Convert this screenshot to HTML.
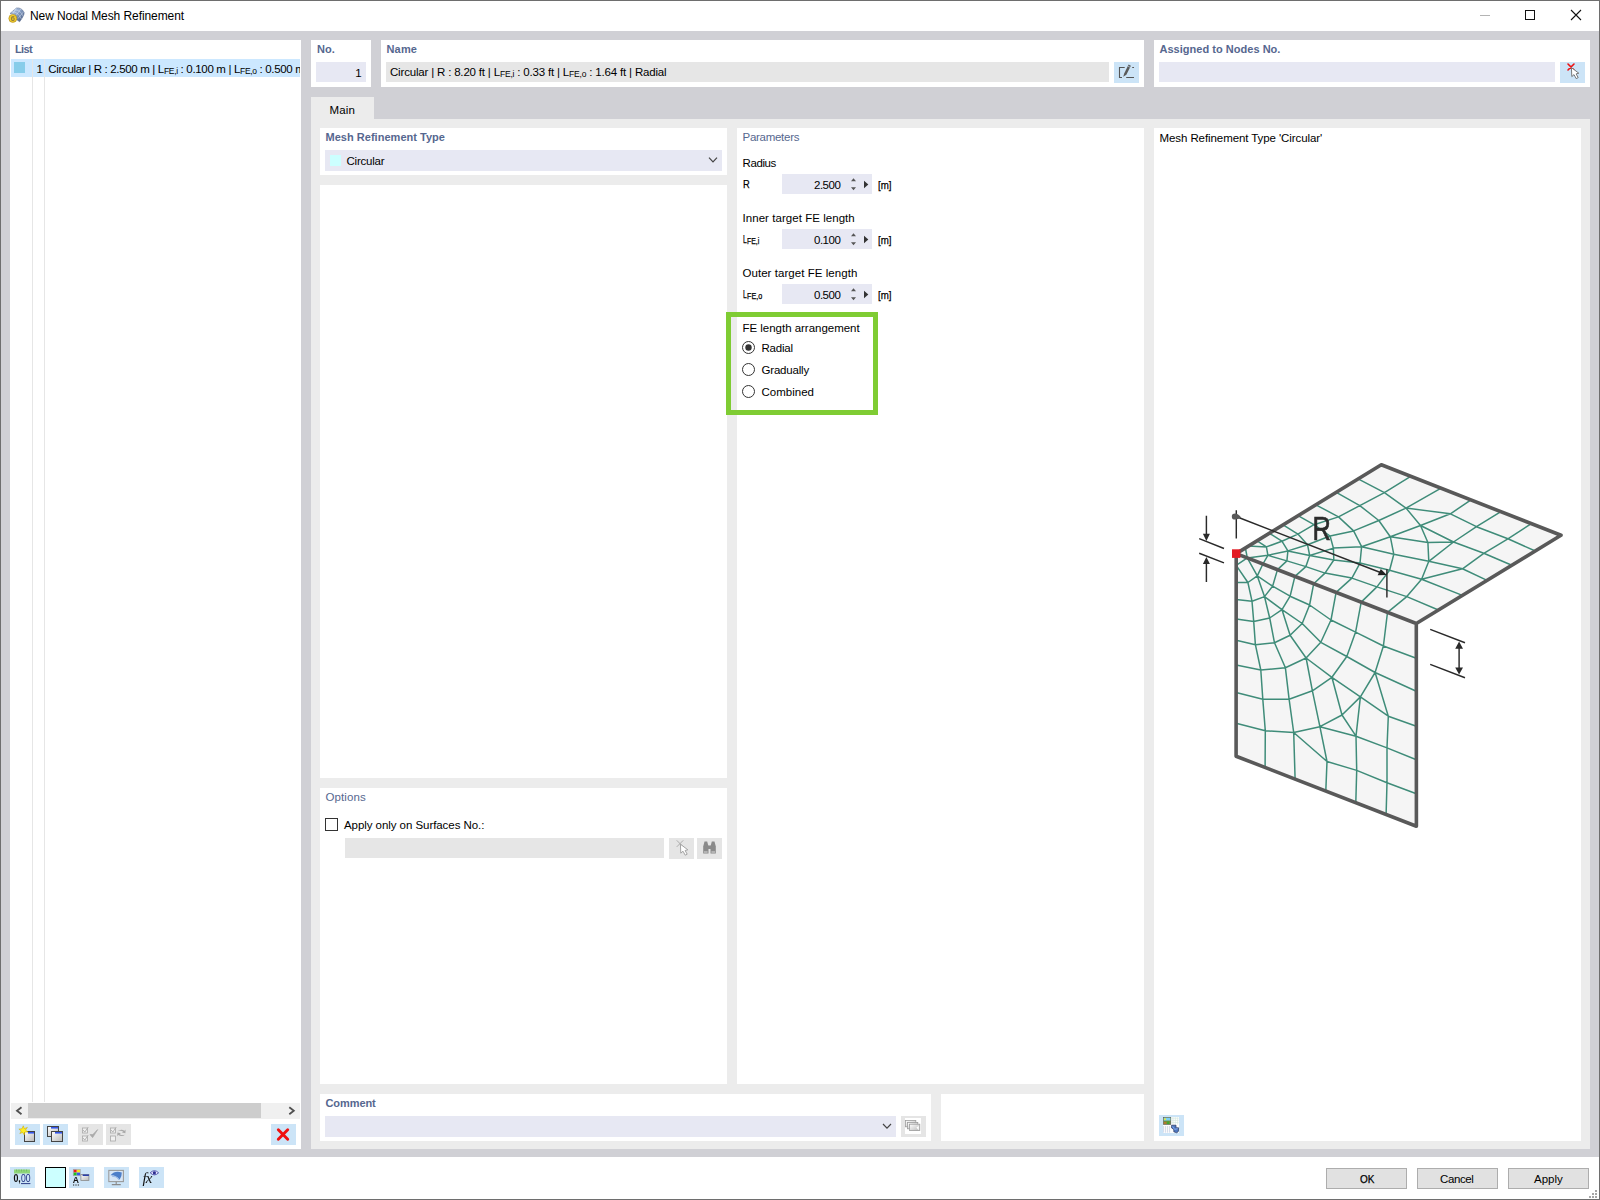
<!DOCTYPE html>
<html><head><meta charset="utf-8"><title>New Nodal Mesh Refinement</title>
<style>
html,body{margin:0;padding:0;}
body{width:1600px;height:1200px;position:relative;overflow:hidden;background:#fff;font-family:"Liberation Sans",sans-serif;font-size:12px;}
body>div,body>span,body>svg{position:absolute;}
.t{white-space:nowrap;}
sub.s{font-size:8.5px;vertical-align:baseline;position:relative;top:0.7px;line-height:0;}
</style></head><body>
<div style="left:0px;top:0px;width:1600px;height:1200px;background:#fff;"></div>
<div style="left:1px;top:31px;width:1598px;height:1126px;background:#d0d0d5;"></div>
<div style="left:10px;top:40px;width:291px;height:1109px;background:#fff;"></div>
<div style="left:11px;top:59px;width:289px;height:18px;background:#cce8ff;"></div>
<div style="left:14px;top:62px;width:11px;height:11px;background:#87cdea;"></div>
<div style="left:32px;top:59px;width:1px;height:1043px;background:#e6e6e6;"></div>
<div style="left:44px;top:59px;width:1px;height:1043px;background:#e6e6e6;"></div>
<div style="left:11px;top:1103px;width:289px;height:16px;background:#f0f0f0;"></div>
<div style="left:28px;top:1103px;width:233px;height:15px;background:#cdcdcd;"></div>
<div style="left:15px;top:1124px;width:25px;height:21px;background:#cce4f7;"></div>
<div style="left:43px;top:1124px;width:25px;height:21px;background:#cce4f7;"></div>
<div style="left:78px;top:1124px;width:25px;height:21px;background:#e5e5e5;"></div>
<div style="left:106px;top:1124px;width:25px;height:21px;background:#e5e5e5;"></div>
<div style="left:271px;top:1124px;width:25px;height:21px;background:#cce4f7;"></div>
<div style="left:311px;top:40px;width:60px;height:47px;background:#fff;"></div>
<div style="left:316px;top:62px;width:50px;height:20px;background:#e7e8f3;"></div>
<div style="left:381px;top:40px;width:763px;height:47px;background:#fff;"></div>
<div style="left:386px;top:62px;width:723px;height:20px;background:#e6e6e6;"></div>
<div style="left:1114px;top:62px;width:25px;height:21px;background:#cce4f7;"></div>
<div style="left:1154px;top:40px;width:436px;height:47px;background:#fff;"></div>
<div style="left:1159px;top:62px;width:396px;height:20px;background:#e7e8f3;"></div>
<div style="left:1560px;top:62px;width:25px;height:21px;background:#cce4f7;"></div>
<div style="left:311px;top:97px;width:63px;height:23px;background:#ececec;"></div>
<div style="left:311px;top:119px;width:1279px;height:1030px;background:#ececec;"></div>
<div style="left:320px;top:128px;width:407px;height:47px;background:#fff;"></div>
<div style="left:325px;top:150px;width:397px;height:21px;background:#e7e8f3;"></div>
<div style="left:330px;top:155px;width:11px;height:11px;background:#ccffff;"></div>
<div style="left:320px;top:185px;width:407px;height:593px;background:#fff;"></div>
<div style="left:320px;top:788px;width:407px;height:296px;background:#fff;"></div>
<div style="left:345px;top:838px;width:319px;height:20px;background:#e6e6e6;"></div>
<div style="left:669px;top:838px;width:25px;height:21px;background:#e5e5e5;"></div>
<div style="left:697px;top:838px;width:25px;height:21px;background:#e5e5e5;"></div>
<div style="left:737px;top:128px;width:407px;height:956px;background:#fff;"></div>
<div style="left:782px;top:174px;width:90px;height:20px;background:#e7e8f3;"></div>
<div style="left:782px;top:229px;width:90px;height:20px;background:#e7e8f3;"></div>
<div style="left:782px;top:284px;width:90px;height:20px;background:#e7e8f3;"></div>
<div style="left:726px;top:312px;width:152px;height:103px;background:transparent;box-sizing:border-box;border:5px solid #7fcc33;"></div>
<div style="left:1154px;top:128px;width:427px;height:1013px;background:#fff;"></div>
<div style="left:1159px;top:1115px;width:25px;height:21px;background:#cce4f7;"></div>
<div style="left:320px;top:1094px;width:611px;height:47px;background:#fff;"></div>
<div style="left:325px;top:1116px;width:571px;height:21px;background:#e7e8f3;"></div>
<div style="left:901px;top:1116px;width:25px;height:21px;background:#e5e5e5;"></div>
<div style="left:941px;top:1094px;width:203px;height:47px;background:#fff;"></div>
<div style="left:10px;top:1167px;width:25px;height:21px;background:#cce4f7;"></div>
<div style="left:45px;top:1167px;width:21px;height:21px;background:#ccffff;box-sizing:border-box;border:1px solid #000;"></div>
<div style="left:69px;top:1167px;width:25px;height:21px;background:#cce4f7;"></div>
<div style="left:104px;top:1167px;width:25px;height:21px;background:#cce4f7;"></div>
<div style="left:139px;top:1167px;width:25px;height:21px;background:#cce4f7;"></div>
<div style="left:1326px;top:1168px;width:81px;height:21px;background:#e1e1e1;box-sizing:border-box;border:1px solid #adadad;"></div>
<div style="left:1417px;top:1168px;width:81px;height:21px;background:#e1e1e1;box-sizing:border-box;border:1px solid #adadad;"></div>
<div style="left:1508px;top:1168px;width:81px;height:21px;background:#e1e1e1;box-sizing:border-box;border:1px solid #adadad;"></div>
<div style="left:0px;top:0px;width:1600px;height:1px;background:#6e6e6e;"></div>
<div style="left:0px;top:0px;width:1px;height:1200px;background:#6e6e6e;"></div>
<div style="left:1599px;top:0px;width:1px;height:1200px;background:#6e6e6e;"></div>
<div style="left:0px;top:1199px;width:1600px;height:1px;background:#6e6e6e;"></div>
<span id="t_title" class="t" style="left:30.00px;top:8.14px;font-size:12px;font-weight:400;color:#000;line-height:16px;letter-spacing:-0.083px;">New Nodal Mesh Refinement</span>
<span id="t_list" class="t" style="left:15.00px;top:40.69px;font-size:11px;font-weight:700;color:#56678f;line-height:16px;letter-spacing:-0.667px;">List</span>
<span id="t_row1" class="t" style="left:36.50px;top:61.02px;font-size:11.5px;font-weight:400;color:#000;line-height:16px;">1</span>
<span id="t_rowtxt" class="t" style="left:48.30px;top:61.02px;font-size:11.5px;font-weight:400;color:#000;line-height:16px;letter-spacing:-0.330px;display:block;overflow:hidden;width:251.70px;">Circular | R : 2.500 m | L<sub class="s">FE,i</sub> : 0.100 m | L<sub class="s">FE,o</sub> : 0.500 m</span>
<span id="t_no" class="t" style="left:317.00px;top:41.19px;font-size:11px;font-weight:700;color:#56678f;line-height:16px;">No.</span>
<span id="t_noval" class="t" style="left:355.30px;top:65.02px;font-size:11.5px;font-weight:400;color:#000;line-height:16px;">1</span>
<span id="t_name" class="t" style="left:386.50px;top:41.19px;font-size:11px;font-weight:700;color:#56678f;line-height:16px;letter-spacing:0.167px;">Name</span>
<span id="t_nameval" class="t" style="left:390.00px;top:64.42px;font-size:11.5px;font-weight:400;color:#000;line-height:16px;letter-spacing:-0.182px;">Circular | R : 8.20 ft | L<sub class="s">FE,i</sub> : 0.33 ft | L<sub class="s">FE,o</sub> : 1.64 ft | Radial</span>
<span id="t_assigned" class="t" style="left:1159.50px;top:41.19px;font-size:11px;font-weight:700;color:#56678f;line-height:16px;letter-spacing:0.025px;">Assigned to Nodes No.</span>
<span id="t_main" class="t" style="left:329.50px;top:101.52px;font-size:11.5px;font-weight:400;color:#000;line-height:16px;letter-spacing:0.167px;">Main</span>
<span id="t_mrt" class="t" style="left:325.50px;top:129.19px;font-size:11px;font-weight:700;color:#56678f;line-height:16px;letter-spacing:0.026px;">Mesh Refinement Type</span>
<span id="t_circ" class="t" style="left:346.50px;top:152.52px;font-size:11.5px;font-weight:400;color:#000;line-height:16px;letter-spacing:-0.214px;">Circular</span>
<span id="t_params" class="t" style="left:742.50px;top:129.02px;font-size:11.5px;font-weight:400;color:#56678f;line-height:16px;letter-spacing:-0.278px;">Parameters</span>
<span id="t_radius" class="t" style="left:742.50px;top:154.52px;font-size:11.5px;font-weight:400;color:#000;line-height:16px;letter-spacing:-0.400px;">Radius</span>
<span id="t_R" class="t" style="left:742.50px;top:175.52px;font-size:11.5px;font-weight:400;color:#000;line-height:16px;transform:scaleX(0.812);transform-origin:0 0;-webkit-text-stroke:0.25px currentColor;">R</span>
<span id="t_inner" class="t" style="left:742.50px;top:210.02px;font-size:11.5px;font-weight:400;color:#000;line-height:16px;letter-spacing:0.048px;">Inner target FE length</span>
<span id="t_lfeiL" class="t" style="left:742.50px;top:231.22px;font-size:11.5px;font-weight:400;color:#000;line-height:16px;transform:scaleX(0.600);transform-origin:0 0;-webkit-text-stroke:0.25px currentColor;">L</span>
<span id="t_lfeiS" class="t" style="left:747.30px;top:232.89px;font-size:8.7px;font-weight:400;color:#000;line-height:16px;transform:scaleX(0.794);transform-origin:0 0;-webkit-text-stroke:0.25px currentColor;">FE,i</span>
<span id="t_outer" class="t" style="left:742.50px;top:265.02px;font-size:11.5px;font-weight:400;color:#000;line-height:16px;letter-spacing:0.048px;">Outer target FE length</span>
<span id="t_lfeoL" class="t" style="left:742.50px;top:286.22px;font-size:11.5px;font-weight:400;color:#000;line-height:16px;transform:scaleX(0.600);transform-origin:0 0;-webkit-text-stroke:0.25px currentColor;">L</span>
<span id="t_lfeoS" class="t" style="left:747.30px;top:287.89px;font-size:8.7px;font-weight:400;color:#000;line-height:16px;transform:scaleX(0.826);transform-origin:0 0;-webkit-text-stroke:0.25px currentColor;">FE,o</span>
<span id="t_val0" class="t" style="left:814.00px;top:176.52px;font-size:11.5px;font-weight:400;color:#000;line-height:16px;letter-spacing:-0.500px;">2.500</span>
<span id="t_unit0" class="t" style="left:877.50px;top:177.02px;font-size:11.5px;font-weight:400;color:#000;line-height:16px;transform:scaleX(0.844);transform-origin:0 0;-webkit-text-stroke:0.25px currentColor;">[m]</span>
<span id="t_val1" class="t" style="left:814.00px;top:231.52px;font-size:11.5px;font-weight:400;color:#000;line-height:16px;letter-spacing:-0.500px;">0.100</span>
<span id="t_unit1" class="t" style="left:877.50px;top:232.02px;font-size:11.5px;font-weight:400;color:#000;line-height:16px;transform:scaleX(0.844);transform-origin:0 0;-webkit-text-stroke:0.25px currentColor;">[m]</span>
<span id="t_val2" class="t" style="left:814.00px;top:286.52px;font-size:11.5px;font-weight:400;color:#000;line-height:16px;letter-spacing:-0.500px;">0.500</span>
<span id="t_unit2" class="t" style="left:877.50px;top:287.02px;font-size:11.5px;font-weight:400;color:#000;line-height:16px;transform:scaleX(0.844);transform-origin:0 0;-webkit-text-stroke:0.25px currentColor;">[m]</span>
<span id="t_fela" class="t" style="left:742.50px;top:320.02px;font-size:11.5px;font-weight:400;color:#000;line-height:16px;letter-spacing:-0.025px;">FE length arrangement</span>
<span id="t_radial" class="t" style="left:761.50px;top:339.52px;font-size:11.5px;font-weight:400;color:#000;line-height:16px;letter-spacing:-0.200px;">Radial</span>
<span id="t_grad" class="t" style="left:761.50px;top:361.52px;font-size:11.5px;font-weight:400;color:#000;line-height:16px;letter-spacing:-0.188px;">Gradually</span>
<span id="t_comb" class="t" style="left:761.50px;top:383.52px;font-size:11.5px;font-weight:400;color:#000;line-height:16px;">Combined</span>
<span id="t_options" class="t" style="left:325.50px;top:789.02px;font-size:11.5px;font-weight:400;color:#56678f;line-height:16px;letter-spacing:0.083px;">Options</span>
<span id="t_apply" class="t" style="left:344.00px;top:817.02px;font-size:11.5px;font-weight:400;color:#000;line-height:16px;letter-spacing:-0.058px;">Apply only on Surfaces No.:</span>
<span id="t_mrtc" class="t" style="left:1159.50px;top:130.02px;font-size:11.5px;font-weight:400;color:#000;line-height:16px;letter-spacing:-0.083px;">Mesh Refinement Type 'Circular'</span>
<span id="t_comment" class="t" style="left:325.50px;top:1095.19px;font-size:11px;font-weight:700;color:#56678f;line-height:16px;letter-spacing:-0.083px;">Comment</span>
<span id="t_ok" class="t" style="left:1359.50px;top:1171.02px;font-size:11.5px;font-weight:400;color:#000;line-height:16px;transform:scaleX(0.871);transform-origin:0 0;-webkit-text-stroke:0.25px currentColor;">OK</span>
<span id="t_cancel" class="t" style="left:1440.00px;top:1171.02px;font-size:11.5px;font-weight:400;color:#000;line-height:16px;letter-spacing:-0.400px;">Cancel</span>
<span id="t_applyb" class="t" style="left:1534.00px;top:1171.02px;font-size:11.5px;font-weight:400;color:#000;line-height:16px;">Apply</span>
<svg width="1600" height="1200" viewBox="0 0 1600 1200" style="left:0;top:0;will-change:transform;"><path d="M1480 15.5H1490" stroke="#b4b4b4" stroke-width="1"/>
<rect x="1525.5" y="10.5" width="9" height="9" fill="none" stroke="#111" stroke-width="1"/>
<path d="M1571 10L1581 20M1581 10L1571 20" stroke="#111" stroke-width="1.1" fill="none"/>
<g>
<defs><linearGradient id="gsh" x1="0" y1="0" x2="1" y2="1"><stop offset="0" stop-color="#c3d5f0"/><stop offset="0.45" stop-color="#8aa2c8"/><stop offset="1" stop-color="#3d4f74"/></linearGradient></defs>
<path d="M10 13.5 L16.3 8 Q21.5 7.2 24.2 12.5 Q24.4 15.5 19.6 21.8 L16.5 19.5 Q16 15 13 13.8 Z" fill="url(#gsh)" stroke="#55678a" stroke-width="0.5"/>
<path d="M12 11.8 Q18 11.5 21.5 19.2 M14.2 9.9 Q20.5 9.5 23.2 16.5 M13 13.6 L16.3 8 M16.2 15.2 L21 8.6 M18 18.5 L23.8 11.5" stroke="#e4eefb" stroke-width="0.6" fill="none" opacity="0.75"/>
<circle cx="12.8" cy="18.4" r="4" fill="#f2cb2b" stroke="#a8871c" stroke-width="0.6"/>
<text x="12.8" y="21.2" font-size="7.5" font-weight="700" text-anchor="middle" fill="#8f7d3a" font-family="Liberation Sans, sans-serif">6</text>
</g>
<path d="M21.5 1107.2L17 1110.7L21.5 1114.2" stroke="#505050" stroke-width="1.8" fill="none"/>
<path d="M289.3 1107.2L293.8 1110.7L289.3 1114.2" stroke="#505050" stroke-width="1.8" fill="none"/>
<path d="M709 157.6L713 161.8L717 157.6" stroke="#444" stroke-width="1.2" fill="none"/>
<path d="M883 1124L887 1128.1L891 1124" stroke="#444" stroke-width="1.2" fill="none"/>
<path d="M851 181.2L853.5 178.2L856 181.2Z M851 187.2L853.5 190.2L856 187.2Z" fill="#555"/>
<path d="M864 180.8L868.3 184.5L864 188.2Z" fill="#333"/>
<path d="M851 236.2L853.5 233.2L856 236.2Z M851 242.2L853.5 245.2L856 242.2Z" fill="#555"/>
<path d="M864 235.8L868.3 239.5L864 243.2Z" fill="#333"/>
<path d="M851 291.2L853.5 288.2L856 291.2Z M851 297.2L853.5 300.2L856 297.2Z" fill="#555"/>
<path d="M864 290.8L868.3 294.5L864 298.2Z" fill="#333"/>
<circle cx="748.5" cy="347.5" r="6" fill="#fff" stroke="#333" stroke-width="1"/>
<circle cx="748.5" cy="347.5" r="3.2" fill="#333"/>
<circle cx="748.5" cy="369.5" r="6" fill="#fff" stroke="#333" stroke-width="1"/>
<circle cx="748.5" cy="391.5" r="6" fill="#fff" stroke="#333" stroke-width="1"/>
<rect x="325.5" y="818.5" width="12" height="12" fill="#fff" stroke="#333" stroke-width="1"/>
<rect x="1595" y="1190" width="2" height="2" fill="#a6a6a6"/>
<rect x="1592" y="1193" width="2" height="2" fill="#a6a6a6"/>
<rect x="1595" y="1193" width="2" height="2" fill="#a6a6a6"/>
<rect x="1589" y="1196" width="2" height="2" fill="#a6a6a6"/>
<rect x="1592" y="1196" width="2" height="2" fill="#a6a6a6"/>
<rect x="1595" y="1196" width="2" height="2" fill="#a6a6a6"/>
<path d="M1124.7 67.5H1119.5V77.5H1122 M1126.2 77.5H1134 M1132.2 67.5H1134" stroke="#555" stroke-width="1.1" fill="none"/>
<path d="M1123.2 76.8L1124.2 73.6L1128.6 64.6L1130.9 65.8L1126.4 74.8Z" fill="#5a5a5a"/><path d="M1128.0 66.2L1130.1 67.3" stroke="#cce4f7" stroke-width="0.6"/>
<path d="M1568 64L1574 70M1574 64L1568 70" stroke="#ee1111" stroke-width="1.6" stroke-linecap="round"/>
<path d="M1571.4 67.6L1571.8 76.6L1574 74.6L1576.2 78.6L1578.2 77.6L1576.1 73.9L1578.8 73.2Z" fill="#fff" stroke="#6a6a6a" stroke-width="0.9" stroke-linejoin="round"/>
<path d="M677 840.6L683 846.6M683 840.6L677 846.6" stroke="#a0a0a0" stroke-width="0.8" stroke-linecap="round"/>
<path d="M680.4 844.2L680.8 853.2L683 851.2L685.2 855.2L687.2 854.2L685.1 850.5L687.8 849.8000000000001Z" fill="#fff" stroke="#9a9a9a" stroke-width="0.9" stroke-linejoin="round"/>
<g fill="#8a8a8a"><path d="M703.2 853.5V846.5L704.5 841.5H707.2L708.5 846.5V853.5Z"/><path d="M710.5 853.5V846.5L711.8 841.5H714.5L715.8 846.5V853.5Z"/><rect x="708" y="845.5" width="3" height="3.5"/></g><path d="M704 852H707.6M711.4 852H715" stroke="#e5e5e5" stroke-width="0.9"/>
<path d="M278.3 1129.8L287.7 1139.2M287.7 1129.8L278.3 1139.2" stroke="#f01010" stroke-width="2.9" stroke-linecap="round"/>
<defs><linearGradient id="gw" x1="0" y1="0" x2="1" y2="1"><stop offset="0" stop-color="#ffffff"/><stop offset="1" stop-color="#b9b9b9"/></linearGradient></defs>
<rect x="24.5" y="1131.5" width="10" height="10" fill="url(#gw)" stroke="#444" stroke-width="1"/>
<rect x="25" y="1132" width="9" height="1.6" fill="#f4f4f4"/><rect x="28" y="1132" width="6" height="1.6" fill="#3355e8"/>
<path d="M23.3 1125.8L24.3 1128.6L27.4 1127.4L25.5 1130L27.9 1132L24.8 1132L24.3 1135L22.6 1132.4L19.8 1133.6L21.2 1131L18.9 1129.1L21.9 1128.8Z" fill="#ffee22" stroke="#c9a400" stroke-width="0.5"/>
<rect x="47.5" y="1126.5" width="11" height="10" fill="url(#gw)" stroke="#444" stroke-width="1"/>
<rect x="48" y="1127" width="10" height="1.6" fill="#f4f4f4"/><rect x="51" y="1127" width="7" height="1.6" fill="#3355e8"/>
<rect x="51.5" y="1131.5" width="11" height="10" fill="url(#gw)" stroke="#444" stroke-width="1"/>
<rect x="52" y="1132" width="10" height="1.6" fill="#f4f4f4"/><rect x="55" y="1132" width="7" height="1.6" fill="#3355e8"/>
<rect x="82.5" y="1128.0" width="5" height="5" fill="#f0f0f0" stroke="#a9a9a9" stroke-width="0.8"/>
<path d="M83.2 1130.1L84.8 1132.1L88.2 1127.2" stroke="#a9a9a9" stroke-width="0.9" fill="none"/>
<rect x="82.5" y="1136.0" width="5" height="5" fill="#f0f0f0" stroke="#a9a9a9" stroke-width="0.8"/>
<path d="M83.2 1138.1L84.8 1140.1L88.2 1135.2" stroke="#a9a9a9" stroke-width="0.9" fill="none"/>
<path d="M90 1134.6L92.6 1137.6Q95 1134 97.6 1129.6Q95.2 1132.4 92.8 1134.6Z" fill="#a9a9a9" stroke="#a9a9a9" stroke-width="0.8" stroke-linejoin="round"/>
<rect x="110.5" y="1128.0" width="5" height="5" fill="#f0f0f0" stroke="#a9a9a9" stroke-width="0.8"/>
<path d="M111.2 1130.1L112.8 1132.1L116.2 1127.2" stroke="#a9a9a9" stroke-width="0.9" fill="none"/>
<rect x="110.5" y="1136.0" width="5" height="5" fill="#f0f0f0" stroke="#a9a9a9" stroke-width="0.8"/>
<path d="M117.5 1131.2Q121 1128.4 124.6 1130.8L125.6 1129.6L125.4 1133.2L122 1132.6L123.2 1131.6Q120.6 1130.2 117.5 1131.2Z M125.4 1134.6Q121.8 1137.4 118.2 1135L117.2 1136.2L117.4 1132.6L120.8 1133.2L119.6 1134.2Q122.4 1135.8 125.4 1134.6Z" fill="#a9a9a9"/>
<rect x="14" y="1169.5" width="16" height="4" fill="#8fd67a"/><path d="M16.5 1169.5v2M19 1169.5v2M21.5 1169.5v2M24 1169.5v2M26.5 1169.5v2" stroke="#6cb85a" stroke-width="0.7"/>
<text x="13.4" y="1182.2" font-size="10.5" font-weight="700" fill="#111" font-family="Liberation Sans, sans-serif" textLength="7.4" lengthAdjust="spacingAndGlyphs">0,</text><text x="20.9" y="1182.2" font-size="10.5" fill="#1a2a7a" font-family="Liberation Sans, sans-serif" textLength="9.6" lengthAdjust="spacingAndGlyphs">00</text><path d="M21 1183.6H30.4" stroke="#1a2a7a" stroke-width="0.9"/>
<rect x="73.5" y="1169.6" width="3.2" height="2.9" fill="#ee1c1c"/><rect x="76.9" y="1169.6" width="3.2" height="2.9" fill="#f6e21a"/><rect x="73.5" y="1172.6" width="3.2" height="2.9" fill="#1fc21f"/><rect x="76.9" y="1172.6" width="3.2" height="2.9" fill="#3a55e8"/><rect x="73.2" y="1169.3" width="7.2" height="6.5" fill="none" stroke="#999" stroke-width="0.5"/>
<text x="72.8" y="1183.4" font-size="9.5" font-weight="700" fill="#111" font-family="Liberation Sans, sans-serif" textLength="6.2" lengthAdjust="spacingAndGlyphs">A</text><path d="M73 1185H74.2M75.4 1185H76.6M77.8 1185H79" stroke="#222" stroke-width="1"/>
<rect x="80.9" y="1174.4" width="8" height="6" fill="url(#gw)" stroke="#8a8a8a" stroke-width="0.8"/><rect x="82.6" y="1174.4" width="6.3" height="1.6" fill="#2a3fa8"/>
<rect x="108.8" y="1170.4" width="14.6" height="11.2" fill="#d7e6f6" stroke="#9a9a9a" stroke-width="1.1"/><path d="M110.5 1175.2Q115 1170.2 121.8 1172.6Q122 1176.5 119.6 1179.8Q116.5 1174.8 110.5 1175.2Z" fill="#4d7fc9"/><path d="M112 1176.2Q116.5 1175.8 119 1179.8" stroke="#7fa8e0" stroke-width="0.7" fill="none"/><path d="M116.2 1181.8V1184.4M111.8 1184.6H120.8" stroke="#8a8a8a" stroke-width="1.1"/>
<text x="142.6" y="1183.2" font-size="15" font-style="italic" fill="#111" font-family="Liberation Serif, serif" letter-spacing="-1">fx</text>
<path d="M150.2 1172.8Q154.4 1168.6 158.6 1172.8Q154.4 1177 150.2 1172.8Z" fill="#e8e8ff" stroke="#4a4aa8" stroke-width="0.9"/><circle cx="154.4" cy="1172.8" r="1.6" fill="#2c2c90"/>
<rect x="905" y="1118" width="16" height="16" fill="#fff"/>
<rect x="905.6" y="1120.4" width="10.2" height="6.4" fill="url(#gw)" stroke="#9c9c9c" stroke-width="0.8"/>
<rect x="907.6" y="1122.4" width="10.2" height="6.4" fill="url(#gw)" stroke="#9c9c9c" stroke-width="0.8"/>
<rect x="909.6" y="1124.2" width="10.2" height="6.4" fill="url(#gw)" stroke="#9c9c9c" stroke-width="0.8"/>
<path d="M916.4 1127.6L918.8 1126V1130.2Z" fill="#fff"/>
<rect x="1163" y="1117" width="16" height="16" fill="#fdfdfd"/><rect x="1163.4" y="1117.4" width="7.4" height="7" fill="#6f8f3a" stroke="#555" stroke-width="0.6"/><rect x="1163.8" y="1117.8" width="6.6" height="2.8" fill="#7fd0f0"/><circle cx="1165.2" cy="1119.2" r="0.9" fill="#f4f020"/><path d="M1167 1124L1168 1120.4L1169.2 1124Z" fill="#2fae2f"/><rect x="1163.8" y="1122" width="2.6" height="2" fill="#b07a30"/>
<path d="M1171.4 1118.2H1178.6M1171.4 1120.4H1178.6M1171.4 1122.6H1178.6M1173 1117.4V1124.4M1175.4 1117.4V1124.4M1177.6 1117.4V1124.4" stroke="#cfe6da" stroke-width="0.6"/>
<path d="M1163.6 1126V1132.6M1165.6 1126V1132.6M1167.6 1126V1132.6M1169.6 1126V1132.6" stroke="#c6cfe2" stroke-width="0.8"/>
<path d="M1171.6 1125.2H1176V1127.8H1178.6L1178.4 1131.4L1176.8 1132.8L1173.8 1131.8V1129.4L1171.6 1128Z" fill="#4f78c0" stroke="#24355e" stroke-width="0.7"/><path d="M1172.6 1126.4L1174.6 1129.4L1177.6 1128.6" stroke="#86aef0" stroke-width="0.9" fill="none"/>
<g><path d="M1236.2 553.6L1381.3 464.7L1561.0 535.3L1416.3 623.5Z M1236.2 553.6L1416.3 623.5L1416.4 826.3L1236.1 756.2Z" fill="#f5f5f5"/>
<path d="M1245.4 548.0L1247.3 557.9 M1257.1 540.8L1266.4 546.9L1267.9 555.3L1262.9 564.0 M1269.3 533.3L1281.9 541.2L1287.9 550.9L1286.9 560.9L1277.5 569.6 M1283.1 524.9L1297.9 534.1L1307.5 544.7L1309.7 555.5L1305.9 566.6L1294.9 576.4 M1298.0 515.7L1314.0 524.7L1330.1 536.0L1333.4 548.1L1333.8 560.0L1325.0 573.1L1313.7 583.7 M1315.9 504.8L1338.5 516.9L1353.6 530.9L1361.6 546.7L1360.0 563.1L1351.9 578.1L1336.1 592.4 M1336.3 492.3L1359.8 505.6L1378.8 520.5L1390.3 536.7L1393.8 554.3L1389.6 570.3L1376.9 586.9L1361.2 602.1 M1358.1 478.9L1384.4 492.6L1406.0 508.1L1420.5 525.5L1427.9 542.5L1428.8 561.3L1421.6 579.3L1406.8 596.6L1387.5 612.3 M1248.5 546.1L1266.4 546.9L1281.9 541.2L1297.9 534.1L1314.0 524.7L1338.5 516.9L1359.8 505.6L1384.4 492.6L1410.7 476.3 M1247.3 557.9L1267.9 555.3L1287.9 550.9L1307.5 544.7L1330.1 536.0L1353.6 530.9L1378.8 520.5L1406.0 508.1L1441.1 488.2 M1287.9 550.9L1309.7 555.5L1333.4 548.1L1361.6 546.7L1390.3 536.7L1420.5 525.5L1450.4 513.8L1471.0 499.9 M1267.9 555.3L1286.9 560.9L1305.9 566.6L1325.0 573.1L1351.9 578.1L1376.9 586.9L1406.8 596.6L1438.4 610.0 M1309.7 555.5L1333.8 560.0L1360.0 563.1L1389.6 570.3L1421.6 579.3L1462.4 595.4 M1361.6 546.7L1393.8 554.3L1428.8 561.3L1462.5 568.8L1487.1 580.4 M1390.3 536.7L1427.9 542.5L1453.5 542.0 M1406.0 508.1L1450.4 513.8L1476.5 526.7L1507.9 538.8L1535.3 551.0 M1420.5 525.5L1453.5 542.0L1483.8 553.3L1511.8 565.3 M1453.5 542.0L1476.5 526.7L1500.9 511.7 M1428.8 561.3L1453.5 542.0 M1421.6 579.3L1462.5 568.8L1483.8 553.3L1507.9 538.8L1531.3 523.6" fill="none" stroke="#3f8c79" stroke-width="1.5" stroke-linejoin="round"/>
<path d="M1247.3 557.9L1236.2 565.3 M1262.9 564.0L1257.3 575.9L1247.9 582.5L1236.2 582.5 M1277.5 569.6L1272.6 586.2L1264.5 596.6L1252.0 601.2L1236.2 599.4 M1294.9 576.4L1290.1 596.2L1282.0 609.7L1269.7 618.0L1253.7 621.4L1236.2 619.1 M1313.7 583.7L1309.6 605.0L1302.2 623.5L1290.1 635.3L1274.5 642.8L1255.4 644.7L1236.2 640.3 M1336.1 592.4L1331.0 620.0L1320.8 642.3L1306.1 658.0L1285.4 667.8L1260.8 670.0L1236.1 665.0 M1361.2 602.1L1355.6 632.1L1346.8 656.5L1331.9 677.3L1312.4 690.8L1289.1 699.2L1262.8 699.2L1236.1 692.5 M1387.5 612.3L1383.4 646.0L1375.1 672.5L1360.4 696.9L1342.0 715.0L1319.9 726.7L1293.7 732.5L1265.3 730.8L1236.1 723.3 M1247.3 557.9L1257.3 575.9L1272.6 586.2L1290.1 596.2L1309.6 605.0L1331.0 620.0L1355.6 632.1L1383.4 646.0L1416.3 658.3 M1236.2 565.3L1247.9 582.5L1252.0 601.2L1253.7 621.4L1255.4 644.7L1260.8 670.0L1262.8 699.2L1265.3 730.8L1265.1 767.5 M1257.3 575.9L1264.5 596.6L1269.7 618.0L1274.5 642.8L1285.4 667.8L1289.1 699.2L1293.7 732.5L1295.1 779.1 M1264.5 596.6L1282.0 609.7L1290.1 635.3L1306.1 658.0L1312.4 690.8L1319.9 726.7L1327.0 761.5L1325.8 791.1 M1282.0 609.7L1302.2 623.5L1320.8 642.3L1346.8 656.5L1375.1 672.5L1416.3 691.3 M1306.1 658.0L1331.9 677.3L1360.4 696.9L1388.3 716.2L1416.4 726.3 M1331.9 677.3L1342.0 715.0L1356.0 736.2 M1360.4 696.9L1356.0 736.2L1356.7 770.4L1355.8 802.7 M1319.9 726.7L1356.0 736.2L1387.0 747.9L1416.4 759.8 M1375.1 672.5L1388.3 716.2L1387.0 747.9L1387.0 782.8L1386.1 814.5 M1293.7 732.5L1327.0 761.5L1356.7 770.4L1387.0 782.8L1416.4 793.8" fill="none" stroke="#3f8c79" stroke-width="1.5" stroke-linejoin="round"/>
<path d="M1236.2 553.6L1381.3 464.7L1561.0 535.3L1416.3 623.5Z M1416.3 623.5L1416.4 826.3L1236.1 756.2L1236.2 553.6" fill="none" stroke="#595959" stroke-width="3.6" stroke-linejoin="round" stroke-linecap="round"/>
<rect x="1232" y="549.3" width="8.4" height="8.6" fill="#e31b23"/>
<g stroke="#2a2a2a" stroke-width="1.45" fill="none"><path d="M1236.3 510.2V538.5 M1386.9 569.3V597.4 M1238 517.3L1383 573.5"/></g>
<path d="M1231.8 516.4Q1231.8 513.6 1235.2 513.6Q1238 513.6 1241.2 517.6Q1238 519.6 1235.2 519.6Q1231.8 519.6 1231.8 516.4Z" fill="#595959"/>
<path d="M1386.8 575.1L1377.6 575.3L1380.8 568.9Z" fill="#222"/>
<text x="1312.4" y="540.5" font-size="32.5" fill="#2b2b2b" stroke="#2b2b2b" stroke-width="0.7" font-family="Liberation Sans, sans-serif" transform="translate(1312.4 0) scale(0.78 1) translate(-1312.4 0)">R</text>
<g stroke="#2a2a2a" stroke-width="1.45" fill="none"><path d="M1206.4 515.8V536 M1206.4 582.1V562 M1199.2 538.7L1224 548.5 M1199.2 553.2L1224 562.9"/></g>
<path d="M1206.4 541L1202.9 533.7H1209.9Z M1206.4 557L1202.9 563.9H1209.9Z" fill="#2a2a2a"/>
<g stroke="#2a2a2a" stroke-width="1.45" fill="none"><path d="M1430.2 629.4L1465 642.8 M1430.2 664.4L1465 677.8 M1459.1 646V671"/></g>
<path d="M1459.1 641.6L1455.2 648.8H1463Z M1459.1 674.4L1455.2 667.5H1463Z" fill="#2a2a2a"/></g></svg>
</body></html>
